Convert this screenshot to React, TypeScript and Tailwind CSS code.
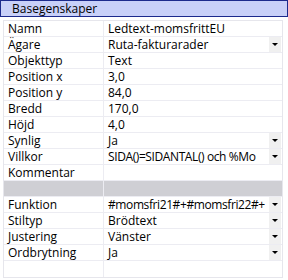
const rows: { label: string; value: string; dropdown?: boolean; gray?: boolean; tight?: boolean }[] = [
  { label: 'Namn', value: 'Ledtext-momsfrittEU' },
  { label: 'Ägare', value: 'Ruta-fakturarader', dropdown: true },
  { label: 'Objekttyp', value: 'Text' },
  { label: 'Position x', value: '3,0' },
  { label: 'Position y', value: '84,0' },
  { label: 'Bredd', value: '170,0' },
  { label: 'Höjd', value: '4,0' },
  { label: 'Synlig', value: 'Ja', dropdown: true },
  { label: 'Villkor', value: 'SIDA()=SIDANTAL() och %Mo', dropdown: true, tight: true },
  { label: 'Kommentar', value: '' },
  { label: '', value: '', gray: true },
  { label: 'Funktion', value: '#momsfri21#+#momsfri22#+', dropdown: true, tight: true },
  { label: 'Stiltyp', value: 'Brödtext', dropdown: true },
  { label: 'Justering', value: 'Vänster', dropdown: true },
  { label: 'Ordbrytning', value: 'Ja', dropdown: true },
  { label: '', value: '' },
];

export default function App() {
  return (
    <div className="w-[288px] h-[280px] bg-white text-black text-[12px] leading-[15px] overflow-hidden" style={{ fontFamily: '"Open Sans", "DejaVu Sans", sans-serif' }}>
      <div className="h-[17px] border border-[#1c2a8c] bg-[#c8d0f8] pl-[11px] flex items-center">
        Basegenskaper
      </div>
      <div className="ml-[3px] mt-[3px] w-[280px] border border-[#e6e6ec]">
        {rows.map((r, i) => (
          <div
            key={i}
            className={`flex h-[16px] border-b border-[#ececf2] last:border-b-0 ${r.gray ? 'bg-[#cfcfd4]' : ''}`}
          >
            <div className="w-[100px] shrink-0 border-r border-[#ececf2] pl-[4px] whitespace-nowrap overflow-hidden">
              {r.label}
            </div>
            <div className="flex-1 flex min-w-0 pl-[4px] pr-[1px]">
              <div className={`flex-1 min-w-0 whitespace-nowrap ${r.tight ? 'tracking-[-0.4px]' : ''}`}>{r.value}</div>
              {r.dropdown && (
                <div className="w-[12px] h-[15px] bg-[#f0f0f0] flex items-center justify-center shrink-0 ml-[2px]">
                  <div className="w-0 h-0 border-l-[3px] border-r-[3px] border-t-[3px] border-l-transparent border-r-transparent border-t-black" />
                </div>
              )}
            </div>
          </div>
        ))}
      </div>
    </div>
  );
}
